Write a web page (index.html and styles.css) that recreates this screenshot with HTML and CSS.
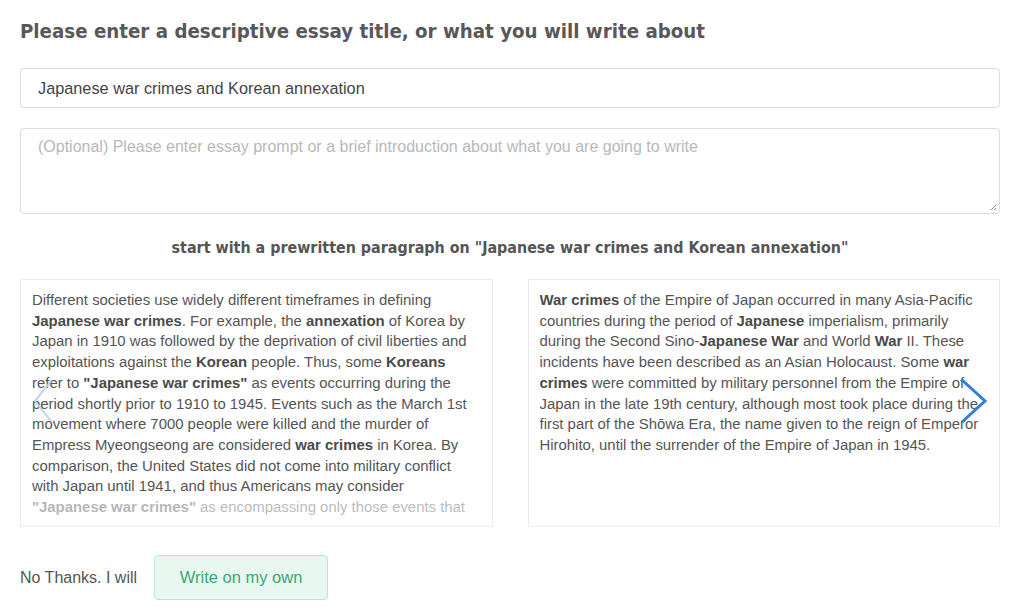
FILE: index.html
```html
<!DOCTYPE html>
<html>
<head>
<meta charset="utf-8">
<link rel="stylesheet" href="styles.css">
</head>
<body>
<div class="page">
  <h1 class="title">Please enter a descriptive essay title, or what you will write about</h1>
  <div class="field field-title">Japanese war crimes and Korean annexation</div>
  <div class="field field-prompt"><span class="placeholder">(Optional) Please enter essay prompt or a brief introduction about what you are going to write</span>
    <svg class="grip" width="8" height="8" viewBox="0 0 8 8"><path d="M7 2L2 7M7 5L5 7" stroke="#888" stroke-width="1"/></svg>
  </div>
  <h2 class="subtitle">start with a prewritten paragraph on "Japanese war crimes and Korean annexation"</h2>
  <div class="cards">
    <div class="card">
      <div class="clip">
        <p>Different societies use widely different timeframes in defining <b>Japanese war crimes</b>. For example, the <b>annexation</b> of Korea by Japan in 1910 was followed by the deprivation of civil liberties and exploitations against the <b>Korean</b> people. Thus, some <b>Koreans</b> refer to <b>"Japanese war crimes"</b> as events occurring during the period shortly prior to 1910 to 1945. Events such as the March 1st movement where 7000 people were killed and the murder of Empress Myeongseong are considered <b>war crimes</b> in Korea. By comparison, the United States did not come into military conflict with Japan until 1941, and thus Americans may consider <b>"Japanese war crimes"</b> as encompassing only those events that occurred after the attack on Pearl Harbor.</p>
        <div class="fade"></div>
      </div>
    </div>
    <div class="card">
      <div class="clip">
        <p><b>War crimes</b> of the Empire of Japan occurred in many Asia-Pacific countries during the period of <b>Japanese</b> imperialism, primarily during the Second Sino-<b>Japanese War</b> and World <b>War</b> II. These incidents have been described as an Asian Holocaust. Some <b>war crimes</b> were committed by military personnel from the Empire of Japan in the late 19th century, although most took place during the first part of the Shōwa Era, the name given to the reign of Emperor Hirohito, until the surrender of the Empire of Japan in 1945.</p>
      </div>
    </div>
    <svg class="arrow arrow-left" width="20" height="44" viewBox="0 0 20 44"><path d="M18 2L2 22L18 42" fill="none" stroke="#bcd2ec" stroke-width="2"/></svg>
    <svg class="arrow arrow-right" width="30" height="46" viewBox="0 0 30 46"><path d="M3 2L26 23L3 44" fill="none" stroke="#2f7ddd" stroke-width="3"/></svg>
  </div>
  <div class="actions">
    <span class="nothanks">No Thanks. I will</span>
    <button class="btn-own">Write on my own</button>
  </div>
</div>
</body>
</html>
```
FILE: styles.css
```css
html, body { margin: 0; padding: 0; background: #fff; }
body { font-family: "Liberation Sans", Arial, sans-serif; color: #555; }
.page { padding: 17px 24px 0 20px; }
.title {
  margin: 0 0 23px 0;
  font-family: "DejaVu Sans Condensed", "DejaVu Sans", sans-serif;
  font-weight: bold;
  font-size: 20.3px;
  line-height: 28px;
  color: #58585a;
}
.field {
  border: 1px solid #dcdcdc;
  border-radius: 4px;
  box-sizing: border-box;
  padding: 0 17px;
  font-size: 16px;
}
.field-title {
  height: 40px;
  line-height: 39px;
  color: #444;
  font-size: 16.3px;
  margin-bottom: 20px;
}
.field-prompt {
  height: 86px;
  padding-top: 9px;
  position: relative;
}
.placeholder { color: #b8b8b8; font-size: 16px; }
.grip { position: absolute; right: 2px; bottom: 2px; }
.subtitle {
  margin: 24px 0 21px 0;
  text-align: center;
  font-family: "DejaVu Sans Condensed", "DejaVu Sans", sans-serif;
  font-size: 15.9px;
  line-height: 20px;
  font-weight: bold;
  color: #555;
}
.cards {
  display: grid;
  grid-template-columns: 1fr 1fr;
  gap: 35px;
  position: relative;
}
.card {
  border: 1px solid #ececec;
  height: 248px;
  box-sizing: border-box;
  padding: 10px 16px 10px 11px;
}
.clip {
  position: relative;
  max-height: 228px;
  overflow: hidden;
}
.card p {
  margin: 0;
  font-size: 14.9px;
  line-height: 20.7px;
  color: #555;
}
.card b { color: #4a4a4a; }
.fade {
  position: absolute;
  left: 0; right: 0; bottom: 0;
  height: 22px;
  background: rgba(255,255,255,0.6);
}
.arrow { position: absolute; }
.arrow-left { left: 13px; top: 100px; }
.arrow-right { right: 11px; top: 99px; }
.actions {
  display: flex;
  align-items: center;
  margin-top: 28px;
  gap: 17px;
}
.nothanks { font-size: 16px; color: #555; }
.btn-own {
  width: 174px;
  height: 45px;
  border: 1px solid #b9e6cf;
  border-radius: 4px;
  background: #e8f8f0;
  color: #3aa874;
  font-family: "Liberation Sans", Arial, sans-serif;
  font-size: 16.5px;
}
```
